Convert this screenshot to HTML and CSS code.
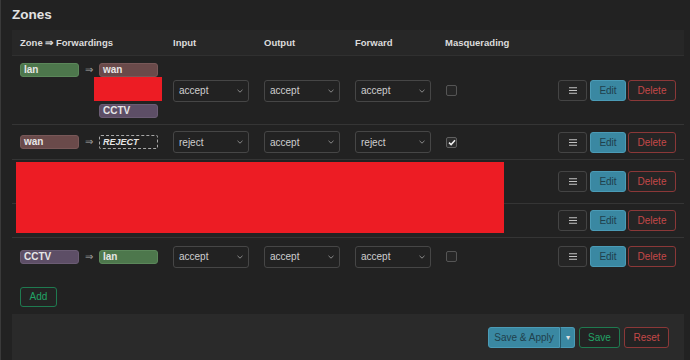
FILE: index.html
```html
<!DOCTYPE html>
<html>
<head>
<meta charset="utf-8">
<link rel="stylesheet" href="styles.css">
</head>
<body>
<div class="page">
  <h2 class="title">Zones</h2>
  <div class="table">
    <div class="row head">
      <div class="cell">Zone ⇒ Forwardings</div>
      <div class="cell">Input</div>
      <div class="cell">Output</div>
      <div class="cell">Forward</div>
      <div class="cell">Masquerading</div>
      <div class="cell"></div>
    </div>

    <div class="row r1">
      <div class="cell zone">
        <span class="badge lan">lan</span>
        <span class="arrow">⇒</span>
        <div class="fwds">
          <span class="badge wan">wan</span>
          <span class="redact-small"></span>
          <span class="badge cctv gap">CCTV</span>
        </div>
      </div>
      <div class="cell"><div class="select"><span>accept</span><svg width="6" height="4" viewBox="0 0 6 4"><path d="M0.5 0.8 L3 3.2 L5.5 0.8" fill="none" stroke="#8a8a8a" stroke-width="1"/></svg></div></div>
      <div class="cell"><div class="select"><span>accept</span><svg width="6" height="4" viewBox="0 0 6 4"><path d="M0.5 0.8 L3 3.2 L5.5 0.8" fill="none" stroke="#8a8a8a" stroke-width="1"/></svg></div></div>
      <div class="cell"><div class="select"><span>accept</span><svg width="6" height="4" viewBox="0 0 6 4"><path d="M0.5 0.8 L3 3.2 L5.5 0.8" fill="none" stroke="#8a8a8a" stroke-width="1"/></svg></div></div>
      <div class="cell"><span class="check"></span></div>
      <div class="cell actions">
        <button class="btn menu"><svg width="8" height="7" viewBox="0 0 8 7"><path d="M0 0.75H8M0 3.5H8M0 6.25H8" stroke="#c4c4c4" stroke-width="1.1"/></svg></button>
        <button class="btn edit">Edit</button>
        <button class="btn del">Delete</button>
      </div>
    </div>

    <div class="row r2">
      <div class="cell zone">
        <span class="badge wan">wan</span>
        <span class="arrow">⇒</span>
        <div class="fwds">
          <span class="reject">REJECT</span>
        </div>
      </div>
      <div class="cell"><div class="select"><span>reject</span><svg width="6" height="4" viewBox="0 0 6 4"><path d="M0.5 0.8 L3 3.2 L5.5 0.8" fill="none" stroke="#8a8a8a" stroke-width="1"/></svg></div></div>
      <div class="cell"><div class="select"><span>accept</span><svg width="6" height="4" viewBox="0 0 6 4"><path d="M0.5 0.8 L3 3.2 L5.5 0.8" fill="none" stroke="#8a8a8a" stroke-width="1"/></svg></div></div>
      <div class="cell"><div class="select"><span>reject</span><svg width="6" height="4" viewBox="0 0 6 4"><path d="M0.5 0.8 L3 3.2 L5.5 0.8" fill="none" stroke="#8a8a8a" stroke-width="1"/></svg></div></div>
      <div class="cell"><span class="check on"><svg width="8" height="7" viewBox="0 0 8 7"><path d="M1 3.6 L3.1 5.6 L7 1.2" fill="none" stroke="#f0f0f0" stroke-width="1.5"/></svg></span></div>
      <div class="cell actions">
        <button class="btn menu"><svg width="8" height="7" viewBox="0 0 8 7"><path d="M0 0.75H8M0 3.5H8M0 6.25H8" stroke="#c4c4c4" stroke-width="1.1"/></svg></button>
        <button class="btn edit">Edit</button>
        <button class="btn del">Delete</button>
      </div>
    </div>

    <div class="row r3">
      <div class="cell zone"></div>
      <div class="cell"></div>
      <div class="cell"></div>
      <div class="cell"></div>
      <div class="cell"></div>
      <div class="cell actions">
        <button class="btn menu"><svg width="8" height="7" viewBox="0 0 8 7"><path d="M0 0.75H8M0 3.5H8M0 6.25H8" stroke="#c4c4c4" stroke-width="1.1"/></svg></button>
        <button class="btn edit">Edit</button>
        <button class="btn del">Delete</button>
      </div>
    </div>

    <div class="row r4">
      <div class="cell zone"></div>
      <div class="cell"></div>
      <div class="cell"></div>
      <div class="cell"></div>
      <div class="cell"></div>
      <div class="cell actions">
        <button class="btn menu"><svg width="8" height="7" viewBox="0 0 8 7"><path d="M0 0.75H8M0 3.5H8M0 6.25H8" stroke="#c4c4c4" stroke-width="1.1"/></svg></button>
        <button class="btn edit">Edit</button>
        <button class="btn del">Delete</button>
      </div>
    </div>

    <div class="row r5">
      <div class="cell zone">
        <span class="badge cctv">CCTV</span>
        <span class="arrow">⇒</span>
        <div class="fwds">
          <span class="badge lan">lan</span>
        </div>
      </div>
      <div class="cell"><div class="select"><span>accept</span><svg width="6" height="4" viewBox="0 0 6 4"><path d="M0.5 0.8 L3 3.2 L5.5 0.8" fill="none" stroke="#8a8a8a" stroke-width="1"/></svg></div></div>
      <div class="cell"><div class="select"><span>accept</span><svg width="6" height="4" viewBox="0 0 6 4"><path d="M0.5 0.8 L3 3.2 L5.5 0.8" fill="none" stroke="#8a8a8a" stroke-width="1"/></svg></div></div>
      <div class="cell"><div class="select"><span>accept</span><svg width="6" height="4" viewBox="0 0 6 4"><path d="M0.5 0.8 L3 3.2 L5.5 0.8" fill="none" stroke="#8a8a8a" stroke-width="1"/></svg></div></div>
      <div class="cell"><span class="check"></span></div>
      <div class="cell actions">
        <button class="btn menu"><svg width="8" height="7" viewBox="0 0 8 7"><path d="M0 0.75H8M0 3.5H8M0 6.25H8" stroke="#c4c4c4" stroke-width="1.1"/></svg></button>
        <button class="btn edit">Edit</button>
        <button class="btn del">Delete</button>
      </div>
    </div>

    <div class="redact-big"></div>
  </div>

  <div class="add-wrap"><button class="btn add">Add</button></div>

  <div class="footer">
    <div class="split">
      <button class="btn apply">Save &amp; Apply</button>
      <button class="btn apply caret">▾</button>
    </div>
    <button class="btn save">Save</button>
    <button class="btn reset">Reset</button>
  </div>
</div>
</body>
</html>
```

FILE: styles.css
```css
* { box-sizing: border-box; }
html, body { margin: 0; padding: 0; }
body {
  background: #222222;
  font-family: "Liberation Sans", Arial, sans-serif;
  color: #d0d0d0;
  width: 690px;
  height: 360px;
  overflow: hidden;
}
.page {
  border-left: 1px solid #3a3a3a;
  padding: 0 6px 0 11px;
  height: 360px;
}
.title {
  margin: 0;
  padding-top: 6px;
  height: 30px;
  font-size: 13.5px;
  line-height: 18px;
  font-weight: bold;
  color: #e2e2e2;
}
.table { position: relative; }
.row {
  display: grid;
  grid-template-columns: 153px 91px 91px 90px 1fr auto;
  align-items: center;
  border-bottom: 1px solid #353535;
}
.cell { padding-left: 8px; }
.head {
  height: 26px;
  background: #272727;
  font-size: 9.5px;
  font-weight: bold;
  color: #dcdcdc;
  border-bottom: 1px solid #303030;
}
.r1 { padding: 7px 0 6px; }
.r2 { height: 35px; }
.r3 { height: 44px; }
.r4 { height: 34px; }
.r5 { height: 37px; border-bottom: none; }

.zone { display: flex; align-items: flex-start; }
.fwds { display: flex; flex-direction: column; align-items: flex-start; }
.arrow {
  width: 20px;
  text-align: center;
  font-size: 10px;
  line-height: 14px;
  color: #a8a8a8;
}
.badge {
  display: block;
  width: 59px;
  height: 14px;
  border-radius: 3px;
  padding-left: 3px;
  font-size: 10px;
  font-weight: bold;
  line-height: 12px;
  color: #e6e6e6;
  border: 1px solid transparent;
}
.badge.lan { background: #4d774c; border-color: #5b875a; }
.badge.wan { background: #6a4a4a; border-color: #785858; }
.badge.cctv { background: #5d4e66; border-color: #6b5c74; }
.badge.gap { margin-top: 3px; }
.redact-small {
  display: block;
  width: 68px;
  height: 24px;
  margin-left: -5px;
  background: #ed1c24;
}
.reject {
  display: block;
  width: 59px;
  height: 14px;
  border: 1px dashed #a8a8a8;
  border-radius: 2px;
  padding-left: 3px;
  font-size: 9px;
  font-weight: bold;
  font-style: italic;
  line-height: 12px;
  color: #e6e6e6;
}
.select {
  width: 76px;
  height: 22px;
  border: 1px solid #464646;
  border-radius: 3px;
  background: #222222;
  display: flex;
  align-items: center;
  justify-content: space-between;
  padding: 0 5px 0 5px;
  font-size: 10px;
  color: #cfcfcf;
}
.check {
  display: flex;
  align-items: center;
  justify-content: center;
  width: 11px;
  height: 11px;
  margin-left: 1px;
  border: 1px solid #555;
  border-radius: 2px;
  background: #262626;
}
.check.on { background: #2c2c2c; border-color: #606060; }

.actions {
  display: flex;
  justify-content: flex-end;
  gap: 2px;
  padding-right: 8px;
}
.btn {
  font-family: "Liberation Sans", Arial, sans-serif;
  font-size: 10px;
  height: 21px;
  border-radius: 3px;
  border: 1px solid #444;
  background: #252525;
  color: #cfcfcf;
  padding: 0;
  display: inline-flex;
  align-items: center;
  justify-content: center;
}
.btn.menu { width: 29px; margin-right: 1px; }
.btn.edit {
  width: 36px;
  background: #3a88a2;
  border-color: #4b9bb6;
  color: #20404c;
}
.btn.del {
  width: 48px;
  border-color: #8b3838;
  color: #c44848;
  background: #252525;
}
.add-wrap { padding: 11px 0 7px 8px; }
.btn.add {
  width: 37px;
  height: 20px;
  border-color: #1f7a50;
  color: #22a466;
  background: #232323;
}
.footer {
  background: #2a2a2a;
  height: 46px;
  display: flex;
  justify-content: flex-end;
  align-items: flex-start;
  padding: 13px 15px 0 0;
  gap: 4px;
}
.split { display: flex; }
.btn.apply {
  background: #3a88a2;
  border-color: #4b9bb6;
  color: #20404c;
  width: 72px;
  border-radius: 3px 0 0 3px;
}
.btn.apply.caret {
  width: 15px;
  border-radius: 0 3px 3px 0;
  border-left: 1px solid #24586a;
  font-size: 8px;
  color: #e0e0e0;
}
.btn.save {
  width: 41px;
  border-color: #1f7a50;
  color: #22a466;
  background: #232323;
}
.btn.reset {
  width: 45px;
  border-color: #8b3838;
  color: #c44848;
  background: #232323;
}
.redact-big {
  position: absolute;
  left: 4px;
  top: 132px;
  width: 488px;
  height: 71px;
  background: #ed1c24;
}
```
